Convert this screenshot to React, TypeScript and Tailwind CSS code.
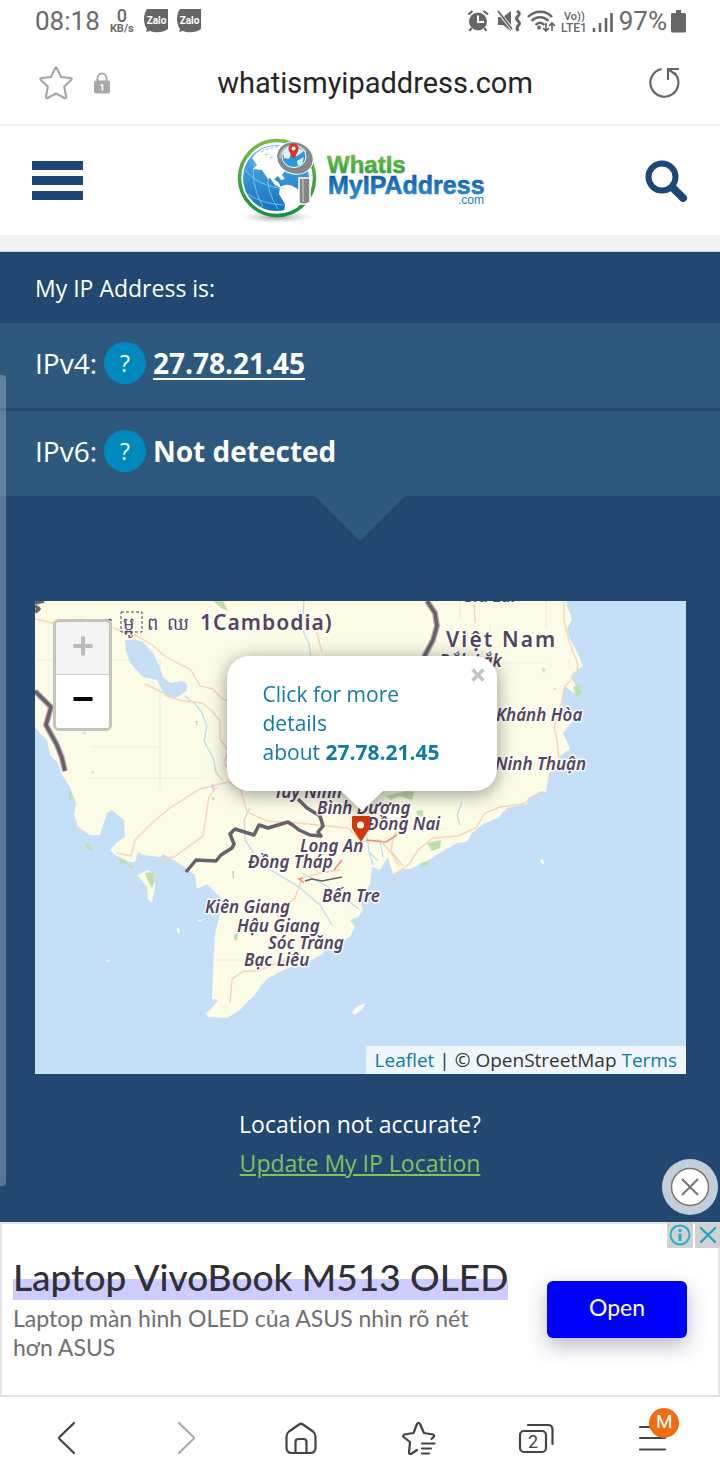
import React from "react";

const SANS = "font-['Open_Sans','Noto_Sans',sans-serif]";

const places = [
  { name: "Đắk Lắk", x: 439, y: 667 },
  { name: "Gia Lai", x: 462, y: 602 },
  { name: "Khánh Hòa", x: 496, y: 721 },
  { name: "Ninh Thuận", x: 495, y: 770 },
  { name: "Tây Ninh", x: 274, y: 798 },
  { name: "Bình Dương", x: 317, y: 814 },
  { name: "Đồng Nai", x: 367, y: 830 },
  { name: "Long An", x: 300, y: 852 },
  { name: "Đồng Tháp", x: 248, y: 868 },
  { name: "Bến Tre", x: 322, y: 902 },
  { name: "Kiên Giang", x: 205, y: 913 },
  { name: "Hậu Giang", x: 237, y: 932 },
  { name: "Sóc Trăng", x: 268, y: 949 },
  { name: "Bạc Liêu", x: 244, y: 966 },
];

const khmer = [
  { glyph: "ក", x: 102 },
  { glyph: "ម្ពូ", x: 123 },
  { glyph: "ព", x: 147 },
  { glyph: "ឈ", x: 167 },
];

function ZaloIcon() {
  return (
    <svg viewBox="0 0 24 24" className="size-6" aria-label="Zalo">
      <path d="M3 0h21v20c-5 4-13 4-18 2l-4 1 1-3C-1 15-1 5 3 0Z" fill="#666" />
      <text x="12.500" y="14.500" textAnchor="middle" fontSize="10" fontWeight="700" fill="#fff" fontFamily="Roboto, sans-serif">
        Zalo
      </text>
    </svg>
  );
}

function StatusBar() {
  return (
    <div className="flex h-[42px] items-center justify-between pl-[35px] pr-[34px] text-[#6a6a6a] font-['Roboto',sans-serif]">
      <div className="flex items-center">
        <span className="text-[26px] leading-8">08:18</span>
        <span className="ml-2 flex w-7 flex-col items-center font-medium">
          <span className="text-[18px] leading-4">0</span>
          <span className="text-[11px] leading-[10px] font-bold">KB/s</span>
        </span>
        <span className="ml-2 flex gap-[9px]">
          <ZaloIcon />
          <ZaloIcon />
        </span>
      </div>
      <div className="flex items-center">
        <svg viewBox="0 0 148 28" className="h-7 w-[148px]" fill="none" stroke="#666" aria-hidden="true">
          <circle cx="11" cy="14.500" r="9" fill="#666" stroke="none" />
          <path d="M11 8.500v6.500h6" stroke="#fff" strokeWidth="2" />
          <path d="M1.500 7.500 5.500 4M16.500 4l4.500 3.500M4.500 21l-2 3M17.500 21l2 3" strokeWidth="2.200" />
          <path d="M31 10h5l8-6v20l-8-6h-5Z" fill="#666" stroke="none" />
          <path d="m30 3 15 19" stroke="#fff" strokeWidth="3.500" />
          <path d="m31 4 14 18" strokeWidth="1.800" />
          <path d="M50 4c3 2 3 3 1 5s-2 3 0 5 2 3 0 5-1 3 0 5" strokeWidth="3" />
          <path d="M61 10c7-7 18-7 24 0M64.500 14c5-5 12-5 17 0M68.500 18c3-3 6-3 9 0" strokeWidth="2.400" />
          <circle cx="72" cy="20.500" r="2" fill="#666" stroke="none" />
          <path d="M79 16v8m-3-3 3 3 3-3M85 24v-8m-3 3 3-3 3 3" strokeWidth="1.700" />
          <g fill="#666" stroke="none" fontFamily="Roboto, sans-serif" fontWeight="500">
            <text x="97" y="13" fontSize="11">Vo))</text>
            <text x="94" y="25" fontSize="12">LTE1</text>
          </g>
          <path d="M127 25v-4M133 25v-9M139 25V11M144.500 25V6" strokeWidth="2.600" />
        </svg>
        <span className="ml-1 text-[26px] leading-8">97%</span>
        <svg viewBox="0 0 15 24" className="ml-1 h-6 w-[15px]" fill="#666" aria-hidden="true">
          <path d="M5 1h5v3h3.500q1.500 0 1.500 1.500V22q0 1.500-1.500 1.500h-12Q0 23.500 0 22V5.500Q0 4 1.500 4H5Z" />
        </svg>
      </div>
    </div>
  );
}

function AddressBar() {
  return (
    <div className="flex h-[84px] items-center justify-between border-b-2 border-[#f0f0f0] pl-[38px] pr-9">
      <div className="flex w-[108px] items-center gap-5">
        <button type="button" aria-label="Bookmark">
          <svg viewBox="0 0 36 36" className="size-9" fill="none" stroke="#a8a8a8" strokeWidth="2.200" strokeLinejoin="round">
            <path d="M17 3.500q1-2 2 0l4 8.500 9.500 1.200q2 .4.700 1.800l-7 6.800 2 10q0 1.800-1.800 1.200L18 28.500 9.600 33q-1.800.7-1.600-1.200l1.800-10-7-6.800q-1.300-1.400.7-1.800L13 12Z" />
          </svg>
        </button>
        <svg viewBox="0 0 16 22" className="h-[22px] w-4 shrink-0" aria-hidden="true">
          <path d="M3.500 10V6a4.500 4.500 0 0 1 9 0v4" fill="none" stroke="#a8a8a8" strokeWidth="1.800" />
          <rect y="8.500" width="16" height="13" rx="2" fill="#a8a8a8" />
          <path d="M6.500 13H8.500v5.500" fill="none" stroke="#fff" strokeWidth="1.600" />
        </svg>
      </div>
      <span className="text-[29px] leading-9 text-[#252525] font-['Roboto',sans-serif]">whatismyipaddress.com</span>
      <div className="flex w-20 justify-end">
        <button type="button" aria-label="Reload">
          <svg viewBox="0 0 36 36" className="size-9" fill="none" stroke="#666" strokeWidth="2.200">
            <path d="M13.500 4A14 14 0 1 0 26 7.500" />
            <path d="M31 4H20v11M20 4l7.500 5.500" />
          </svg>
        </button>
      </div>
    </div>
  );
}

function Logo() {
  return (
    <svg viewBox="0 0 252 90" className="h-[90px] w-[252px]" role="img" aria-label="WhatIsMyIPAddress.com">
      <defs>
        <linearGradient id="ring" x2="0" y2="1">
          <stop stopColor="#76bd43" />
          <stop offset="1" stopColor="#16913f" />
        </linearGradient>
        <linearGradient id="globe" x2="0" y2="1">
          <stop stopColor="#58b5e8" />
          <stop offset="1" stopColor="#1472bd" />
        </linearGradient>
        <linearGradient id="green" x2="0" y2="1">
          <stop stopColor="#80c241" />
          <stop offset="1" stopColor="#279b45" />
        </linearGradient>
        <linearGradient id="blue" x2="0" y2="1">
          <stop offset=".2" stopColor="#155da8" />
          <stop offset="1" stopColor="#2595dc" />
        </linearGradient>
        <radialGradient id="shade">
          <stop stopColor="#777" stopOpacity=".7" />
          <stop offset="1" stopColor="#999" stopOpacity="0" />
        </radialGradient>
      </defs>
      <ellipse cx="43" cy="81" rx="34" ry="6" fill="url(#shade)" />
      <circle cx="43" cy="42" r="37.500" fill="#fff" stroke="url(#ring)" strokeWidth="3.500" />
      <circle cx="42" cy="42" r="33" fill="url(#globe)" />
      <path d="M18 22C24 14 33 9 47 10l11 5-1 20-3 2-3-2-3 4 3 4-4 1-3-4-4 3 5 4 2 5-6-3-5-7-2 1-6-9-9-1 4-4Z" fill="#fff" />
      <path d="M46 51q8-5 16 1l8 5-6 13-10 6-4 0 1-8-6-10Z" fill="#fff" />
      <g fill="none" stroke="#9ed5f5" strokeWidth=".7">
        <path d="M11 34q12 16 40 19M14 58q14 10 36 11M21 25q-6 20 8 46M34 40q-2 14 10 33" />
        <path d="M27 16q12-6 20-5M36 22l8-3M31 19l5-2" stroke="#4aa3dc" strokeDasharray="3 2" />
      </g>
      <path d="M65 42h11v24q-5 4-11 1Z" fill="#858585" stroke="#fff" strokeWidth="1.500" />
      <path d="M69 43v23" stroke="#aaa" strokeWidth="2" />
      <ellipse cx="61" cy="22" rx="18.500" ry="16" fill="#858789" stroke="#fff" transform="rotate(20 61 22)" />
      <path d="M46 22q1-12 14-12 8 0 12 6" fill="none" stroke="#b4b6b7" strokeWidth="2" />
      <ellipse cx="60" cy="20.500" rx="12" ry="11" fill="#289ad9" stroke="#fff" />
      <path d="M49 16q4-7 12-6l9 5-7 5-6-2-2 5-5-1ZM63 25l7-4-2 7-4 2Z" fill="#dff1fb" />
      <path d="M59.500 24c-2-6-5-8-5-11.500a5 5 0 0 1 10 0c0 4-3 6-5 11.500Z" fill="#db332b" />
      <circle cx="59.500" cy="12.500" r="2" fill="#fff" />
      <g fontFamily="'Liberation Sans', Arial, sans-serif">
        <text x="93" y="37" fontSize="24" fontWeight="700" fill="url(#green)" stroke="url(#green)" strokeWidth=".6">WhatIs</text>
        <text x="94" y="58" fontSize="25" fontWeight="700" fill="url(#blue)" stroke="url(#blue)" strokeWidth=".6">MyIPAddress</text>
        <text x="224" y="68" fontSize="12" fill="#2479bd">.com</text>
      </g>
    </svg>
  );
}

function SiteHeader() {
  return (
    <header className="flex h-[109px] items-center justify-between px-8">
      <button type="button" aria-label="Menu" className="flex w-[51px] flex-col gap-[6px]">
        <span className="h-[9px] w-full bg-[#1d4678]" />
        <span className="h-[9px] w-full bg-[#1d4678]" />
        <span className="h-[9px] w-full bg-[#1d4678]" />
      </button>
      <a href="#home">
        <Logo />
      </a>
      <button type="button" aria-label="Search" className="flex w-[51px] justify-end">
        <svg viewBox="0 0 44 44" className="size-11" fill="none" stroke="#1d4678">
          <circle cx="18" cy="18" r="13.500" strokeWidth="6" />
          <path d="m29 29 10 10" strokeWidth="8" strokeLinecap="round" />
        </svg>
      </button>
    </header>
  );
}

function AddressRow({ label, children }: { label: string; children: React.ReactNode }) {
  return (
    <div className="flex h-[85px] items-center gap-[7px] bg-[#2d597f] px-[35px] pb-1.5 text-[28px] leading-9">
      <span>{label}</span>
      <button type="button" aria-label={`About ${label}`} className="size-[42px] rounded-full bg-[#0089bf] text-[23px]">
        ?
      </button>
      {children}
    </div>
  );
}

function MapDrawing() {
  return (
    <svg viewBox="35 601 651 473" className="block w-full" role="img" aria-label="Map of southern Việt Nam">
      <rect x="35" y="601" width="651" height="473" fill="#fcfbe6" />
      <path
        fill="#c5dff6"
        d="M35 727l5 6 7 7 3 15 8 8 4 12 8 12 6 16-2 12 4 12 12 8 10 0 7-22 5-3 12 10 1 17-8 5-7 8 5 5 15 7h5l3-10 5 3 17 2 3-3 14 8 10 7 8 6 2 14 10-5 10 10 12 11-9 9-5 20-2 36-1 29 6 1-5 7-7 6 2 4 19 1 13-8 7-8 6-5 7-10 7-8 16-9 24-8 16-8 2-7 15-5 10-5 5-10-5-7 8-3 5-7-3-10 10-15 2-18 8 3 8-13 5 17 9-5h8l17-8 16-10 14-8 10-1 5-9 11-9 15-6 9-10 20-4 1-6 14-7 4 1 3-19 9-5 2-12 10-7-7-16 10-12-10-8-1-10 3-17 8-13 10-7-5-12-8-15-3-10 5-10-5-13-2-13H686V1074H35Z"
      />
      <g fill="#c5dff6">
        <path d="M125 640q10-1 18 2l10 11 5 10 5 14 7 6 12-2q8 2 4 10l-7 5-6 3-8-3-8-16-14-3-13-14-4-12Z" />
        <path d="m210 787 2-4 3 4-1 4ZM82 733l3-2 1 4ZM543 667l3 2-2 4-2-3ZM553 688l3 0-1 3ZM91 771l4 1-3 2Z" />
      </g>
      <g fill="#fcfbe6">
        <path d="M137 875l11-5 7 5v12l-3 16-4-3-1-13ZM565 678l7 0 5 10-3 5-8-6ZM106 961l6-2-4 3ZM540 860l3-1 1 5-3-1ZM352 1012l6-6 8-3-4 7-8 5ZM197 920h5l-2 2ZM177 927l3 3-1 4-2-2ZM568 713l6-2 3 6-6 4Z" />
      </g>
      <g fill="#bfdeab">
        <path d="M213 601h10l5 10-7-3ZM145 873l9-1 1 8-3 8-4-7ZM119 859l7 1 1 4-7-1ZM69 790l3 5-1 8-2-4ZM85 842l6 4 2 6-6-4ZM386 796l20-5 8 1-2 8-13-4-8 4ZM416 811l7-1 0 7-5-1ZM427 843l14-3-1 8-8 3ZM420 863l10-2-4 5-5 0ZM234 935l4-3-1 9-3-2ZM573 687l6-3 3 9-5 4ZM195 721h3l-1 5ZM232 871h2v8h-1ZM128 864l5 2v3l-4-2ZM211 797l4 1-2 3Z" />
      </g>
      <g fill="none" stroke="#bddaea" strokeWidth="1.200">
        <path d="m185 696 10 8 6 7 6 15-3 15 9 17 3 14 6 8M304 601l-2 28 7 15 2 15M250 808l-6 12 1 20 10 15 14 14 30 18 21 18 12 20M302 873l23 12 15 10 19 14M366 827l3 25 9 9M369 852l4 13M380 842l3 15M462 802l-5 13 3 10" />
        <path d="M35 660h125M160 660v130M92 747h70M546 663h-98M490 625v42M90 778h115M215 912h25M215 960h60M385 829h60M460 600v20M546 601v28" strokeOpacity=".3" />
      </g>
      <g fill="none" stroke="#f7d3ba" strokeWidth="1.400">
        <path d="m35 619 17 4 18-1 10-3 22 5 35 12 15 9 14 12 25 13 9 16 13 3 9 10 18 5M145 684l33 16 24 3 10 8 8 10 0 18 8 12-4 12 13 20M228 782l-28 7-30 19-17 14-18 18-4 16-14-3M228 782l13 8 6 22 20 9 31 2 50 5 12 12M230 745l6 22-6 17M217 787l-8 10-6 39-29 21-16 2" />
        <path d="M564 601v20l5 20 9 23-1 10-12 12-4 18-7 24 3 12 2 20-9 20M540 792l-17 12-23 3-15 6-9 15-18 8-25 2-15 12-9 14-12 9-2 13M474 601l1 22M356 842l24-2 12 14 7 12M400 823l-7 16-2 12 12 15M340 870l-20 3-18 5-7 20-15 12-4 12M285 960l-27 11-14 0-12 8-2 24M70 622v9M314 622l8 30" />
      </g>
      <g fill="none" stroke="#ef9077" strokeWidth="1.600">
        <path d="m342 860-8 10M366 840l20 2 11-7M303 878l-4 1 5 4" />
      </g>
      <g fill="none" stroke="#bbafba" strokeWidth="6" strokeLinejoin="round">
        <path d="M35 691l16 16-5 18 11 20 5 13 3 13M427 601l8 12 2 13-4 14-9 17" />
      </g>
      <g fill="none" stroke="#6b6068" strokeWidth="3.500" strokeLinejoin="round">
        <path d="M35 603l9-2M35 612l4-3-4-3M35 691l16 16-5 18 11 20 5 13 3 13M427 601l8 12 2 13-4 14-9 17" />
        <path d="m298 799 9 9 13 8 3 10-5 6 3 4-11-1-11-5-5-4-6-4-20 6-9-3-5 10-19-6-5 5 4 10-2 4-11 7-5 6-20-1-10 12" />
        <path d="m305 881 7-2 10 2 20-4" strokeWidth="1.600" />
      </g>
      <g fill="#55435f" stroke="#fff" strokeWidth="3" strokeOpacity=".8" strokeLinejoin="round" paintOrder="stroke" fontFamily="'Noto Sans', 'Open Sans', sans-serif" fontWeight="600">
        {places.map((p) => (
          <text key={p.name} x={p.x} y={p.y} fontSize="17" fontStyle="italic">
            {p.name}
          </text>
        ))}
        <text x="446" y="647" fontSize="21" className="tracking-widest">
          Việt Nam
        </text>
        {khmer.map((k) => (
          <text key={k.x} x={k.x} y="630" fontSize="18" fontWeight="400">
            {k.glyph}
          </text>
        ))}
        <text x="200" y="630" fontSize="21" className="tracking-wider">
          1Cambodia)
        </text>
      </g>
      <rect x="121" y="612" width="21" height="20" fill="none" stroke="#55435f" strokeDasharray="3 2" />
      <path d="M352 817q0-1 1-1h16q1 0 1 1v11l-9 14-9-14Z" fill="#d13a0a" />
      <circle cx="360.500" cy="825" r="3.500" fill="#fff" />
    </svg>
  );
}

function LocationMap() {
  return (
    <div className="relative overflow-hidden">
      <MapDrawing />
      <div className="absolute left-[18px] top-[18px] flex w-[59px] flex-col overflow-hidden rounded-md border-[3px] border-[#c5c6b8]">
        <button type="button" aria-label="Zoom in" disabled className="flex h-[53px] items-center justify-center border-b border-[#ccc] bg-[#f4f4f4] pb-1">
          <svg viewBox="0 0 20 20" className="size-5" stroke="#bbb" strokeWidth="4">
            <path d="M0.500 10h19M10 0.500v19" />
          </svg>
        </button>
        <button type="button" aria-label="Zoom out" className="flex h-[53px] items-center justify-center bg-white pb-1.5">
          <svg viewBox="0 0 20 20" className="size-5" stroke="#000" strokeWidth="4">
            <path d="M0.500 10h19" />
          </svg>
        </button>
      </div>
      <div className="absolute left-1/2 top-[55px] w-[270px] -translate-x-[134px] drop-shadow-[0_3px_9px_rgba(0,0,0,0.4)]">
        <div className="relative rounded-[22px] bg-white py-6 pl-9 pr-12 text-[21px] leading-[29px] text-[#117ca3]">
          <a href="#details" className="block">
            Click for more details
            <br />
            about <b>27.78.21.45</b>
          </a>
          <button type="button" aria-label="Close popup" className="absolute right-3 top-3">
            <svg viewBox="0 0 14 14" className="size-[14px]" stroke="#c3c3c3" strokeWidth="3.500">
              <path d="m1.500 1.500 11 11M12.500 1.500l-11 11" />
            </svg>
          </button>
        </div>
        <svg viewBox="0 0 44 20" className="mx-auto -mt-px h-5 w-11" fill="#fff" aria-hidden="true">
          <path d="M0 0h44L24 19q-2 2-4 0Z" />
        </svg>
      </div>
      <div className="absolute bottom-0 right-0 bg-white/70 px-[9px] text-[19px] leading-7 text-[#333]">
        <a href="#leaflet" className="text-[#0f7ba5]">Leaflet</a> | © OpenStreetMap{" "}
        <a href="#terms" className="text-[#0f7ba5]">Terms</a>
      </div>
    </div>
  );
}

function IpPanel() {
  return (
    <main className={`relative flex-1 bg-[#224872] text-white ${SANS}`}>
      <h1 className="flex h-[71px] items-center px-[35px] text-[23px] leading-8">My IP Address is:</h1>
      <div className="flex flex-col gap-[3px]">
        <AddressRow label="IPv4:">
          <a href="#ip" className="font-bold underline decoration-2 underline-offset-4">27.78.21.45</a>
        </AddressRow>
        <AddressRow label="IPv6:">
          <span className="font-bold">Not detected</span>
        </AddressRow>
      </div>
      <svg viewBox="0 0 90 45" className="mx-auto block h-[45px] w-[90px]" fill="#2d597f" aria-hidden="true">
        <path d="M0 0h90L45 45Z" />
      </svg>
      <div className="mt-[60px] pl-[35px] pr-[34px]">
        <LocationMap />
      </div>
      <div className="mt-[31px] flex flex-col items-center pb-[39px] text-[23px] leading-[39px]">
        <p>Location not accurate?</p>
        <a href="#update" className="text-[#7fc35a] underline decoration-2 underline-offset-2">Update My IP Location</a>
      </div>
      <div className="absolute bottom-[36px] left-0 top-[123px] w-[6px] rounded-r-sm bg-white/25" />
      <button type="button" aria-label="Close" className="absolute bottom-[7px] right-[2px] flex size-14 items-center justify-center rounded-full bg-[#c4cedb]">
        <svg viewBox="0 0 40 40" className="size-10" fill="#fff" stroke="#757575" strokeWidth="1.500">
          <circle cx="20" cy="20" r="18.500" />
          <path d="m12 12 16 16M28 12 12 28" strokeWidth="2" />
        </svg>
      </button>
    </main>
  );
}

function AdBanner() {
  return (
    <aside className="relative flex h-[175px] items-center justify-between border-2 border-[#e3e4e8] bg-white pl-[11px] pr-[31px] font-['Lato','Noto_Sans',sans-serif]">
      <div>
        <h2 className="inline-block bg-linear-to-b from-transparent from-50% to-[#ccf] to-50% pb-1 text-[37px] leading-[38px] font-medium whitespace-nowrap text-[#303036]">
          Laptop VivoBook M513 OLED
        </h2>
        <p className="mt-1 max-w-[490px] text-[23px] leading-[29px] text-[#707070]">Laptop màn hình OLED của ASUS nhìn rõ nét hơn ASUS</p>
      </div>
      <button type="button" className="h-[57px] w-[140px] rounded-md bg-[#0000fd] pb-1 text-[23px] text-white shadow-[0_8px_20px_rgba(60,60,100,0.35)]">
        Open
      </button>
      <div className="absolute -right-0.5 -top-0.5 flex gap-0.5">
        <button type="button" aria-label="Ad info" className="flex size-[26px] items-center justify-center bg-[#d2d2d2]">
          <svg viewBox="0 0 22 22" className="size-[22px]" fill="none" stroke="#22b2cb" strokeWidth="2">
            <circle cx="11" cy="11" r="9.500" />
            <path d="M11 9.500V17M11 5v3" strokeWidth="3" />
          </svg>
        </button>
        <button type="button" aria-label="Close ad" className="flex h-[26px] w-[25px] items-center justify-center bg-[#d2d2d2]">
          <svg viewBox="0 0 16 16" className="size-4" stroke="#14a4c0" strokeWidth="2">
            <path d="m0 0 16 16M16 0 0 16" />
          </svg>
        </button>
      </div>
    </aside>
  );
}

function BottomNav() {
  return (
    <nav className="grid h-[83px] grid-cols-6 items-center justify-items-center bg-white px-2 pb-0.5">
      <button type="button" aria-label="Back">
        <svg viewBox="0 0 36 36" className="size-9" fill="none" stroke="#444" strokeWidth="2.200" strokeLinecap="round" strokeLinejoin="round">
          <path d="M25 3 10.500 17q-1 1 0 2L25 33" />
        </svg>
      </button>
      <button type="button" aria-label="Forward" disabled>
        <svg viewBox="0 0 36 36" className="size-9" fill="none" stroke="#aaa" strokeWidth="2.200" strokeLinecap="round" strokeLinejoin="round">
          <path d="M13 3 27.500 17q1 1 0 2L13 33" />
        </svg>
      </button>
      <button type="button" aria-label="Home">
        <svg viewBox="0 0 36 36" className="size-9" fill="none" stroke="#444" strokeWidth="2.200" strokeLinejoin="round">
          <path d="M16 4.500q2-1.500 4 0l10 7q2.500 2 2.500 5v11q0 5.500-5 5.500h-19q-5 0-5-5.500v-11q0-3 2.500-5Z" />
          <path d="M12.500 33V22q0-3 3-3h5q3 0 3 3v11" />
        </svg>
      </button>
      <button type="button" aria-label="Bookmarks">
        <svg viewBox="0 0 36 36" className="size-9" fill="none" stroke="#444" strokeWidth="2.200" strokeLinejoin="round" strokeLinecap="round">
          <path d="M16 30l-6 4q-2 .5-2-1.500l1-10.500L2.500 17q-1-1.500 1-2.500l9-1.500 3.500-9q1.500-2.500 3 0l4 9 9 1.500q2 .5.500 2.500l-2 2M21 23.500h12.500M21 28.500h9M21 33.500h7" />
        </svg>
      </button>
      <button type="button" aria-label="Tabs">
        <svg viewBox="0 0 36 36" className="size-9" fill="none" stroke="#444" strokeWidth="2.200" strokeLinecap="round">
          <rect x="2" y="11" width="26" height="21" rx="4" />
          <path d="M10 5h20q4.500 0 4.500 4.500V24" />
          <text x="15" y="28" textAnchor="middle" fontSize="18" fill="#444" stroke="none" fontFamily="Roboto, sans-serif">2</text>
        </svg>
      </button>
      <button type="button" aria-label="Menu" className="relative">
        <svg viewBox="0 0 36 36" className="size-9" fill="none" stroke="#444" strokeWidth="2.200" strokeLinecap="round">
          <path d="M5 7h25M5 18h25M5 29.500h25" />
        </svg>
        <span className="absolute -right-2 -top-3 flex size-[30px] items-center justify-center rounded-full bg-[#f06d14] text-[19px] text-white font-['Roboto',sans-serif]">
          M
        </span>
      </button>
    </nav>
  );
}

export default function App() {
  return (
    <div className="flex min-h-screen flex-col bg-white">
      <StatusBar />
      <AddressBar />
      <SiteHeader />
      <div className="h-[17px] border-b border-[#c9d3de] bg-[#f1f2f4]" />
      <IpPanel />
      <AdBanner />
      <BottomNav />
    </div>
  );
}
